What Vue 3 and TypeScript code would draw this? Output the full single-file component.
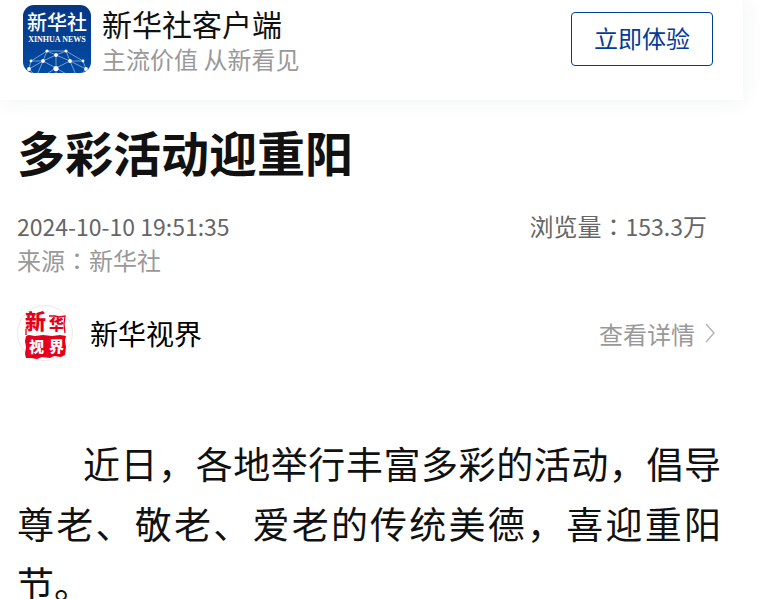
<script setup lang="ts">
interface Article {
  title: string
  time: string
  source: string
  views: string
  account: string
  body: string
}

const article: Article = {
  title: '多彩活动迎重阳',
  time: '2024-10-10 19:51:35',
  source: '新华社',
  views: '153.3',
  account: '新华视界',
  body: '近日，各地举行丰富多彩的活动，倡导尊老、敬老、爱老的传统美德，喜迎重阳节。',
}
</script>

<template>
  <div class="page" lang="zh-CN">
    <header class="banner">
      <svg class="logo" viewBox="0 0 68 68" role="img" aria-label="新华社">
        <defs>
          <linearGradient id="blue" x1="0" y1="0" x2="0" y2="1">
            <stop offset="0" stop-color="#063684" />
            <stop offset="1" stop-color="#034ba4" />
          </linearGradient>
          <clipPath id="tile"><rect width="68" height="68" rx="11" /></clipPath>
        </defs>
        <g clip-path="url(#tile)">
          <rect width="68" height="68" fill="url(#blue)" />
          <text class="logo-cn" x="34" y="25" text-anchor="middle">新华社</text>
          <text class="logo-en" x="34" y="37" text-anchor="middle">XINHUA NEWS</text>
          <path
            d="M6 64 8 56 24 46 43 46 60 56 63 64M24 46 33 50 43 46M8 56 20 56 33 50 47 56 60 56M24 46 20 56 6 64M43 46 47 56 63 64M20 56 33 63 47 56M33 50V68M20 56 14 70M47 56 53 70M33 63 22 70M33 63 45 70M6 64 2 70M6 64 12 70M63 64 67 70M63 64 58 70"
            fill="none" stroke="#a9c3e5" stroke-width="0.7"
          />
          <g fill="#fff">
            <circle cx="24" cy="46" r="1.6" /><circle cx="43" cy="46" r="1.6" />
            <circle cx="33" cy="50" r="1.9" /><circle cx="8" cy="56" r="1.4" />
            <circle cx="20" cy="56" r="1.9" /><circle cx="47" cy="56" r="1.9" />
            <circle cx="60" cy="56" r="1.4" /><circle cx="6" cy="64" r="1.9" />
            <circle cx="33" cy="63.500" r="2.6" /><circle cx="63" cy="64" r="1.9" />
          </g>
        </g>
      </svg>
      <div class="brand">
        <div class="name">新华社客户端</div>
        <div class="slogan">主流价值 从新看见</div>
      </div>
      <button class="try" type="button">立即体验</button>
    </header>

    <main class="article">
      <h1>{{ article.title }}</h1>
      <div class="meta">
        <time class="num">{{ article.time }}</time>
        <span>浏览量<span class="colon" lang="zh-TW">：</span><span class="num">{{ article.views }}</span>万</span>
      </div>
      <div class="source">来源<span class="colon" lang="zh-TW">：</span>{{ article.source }}</div>

      <section class="account">
        <svg class="avatar" viewBox="0 0 56 56" aria-hidden="true">
          <circle cx="28" cy="28" r="27.500" fill="#fff" stroke="#e9e9e9" />
          <path
            d="M9 31l3-1 6 1 8-1 9 1 8-1 6 1-1 5 1 6-1 8-4 2-7-1-4 2-8-1-5 2-6-1-5 0-1-4 1-7-1-6z"
            fill="#e4001b"
          />
          <path d="M32 11l6 0 4 1 6-1-1 8 1 9M9 24v6" fill="none" stroke="#e4001b" stroke-width="1.3" />
          <text class="seal seal-big" x="8" y="24">新</text>
          <text class="seal seal-mid" x="32" y="25">华</text>
          <text class="seal seal-light" x="12" y="47">视</text>
          <text class="seal seal-light" x="32" y="47">界</text>
        </svg>
        <span class="account-name">{{ article.account }}</span>
        <a class="detail" href="#">
          查看详情
          <svg class="arrow" viewBox="0 0 10 20" aria-hidden="true">
            <path d="M1 1 9 10 1 19" fill="none" stroke="#b5b5b5" stroke-width="1.5" />
          </svg>
        </a>
      </section>

      <p class="body">{{ article.body }}</p>
    </main>
  </div>
</template>

<style>
body {
  background: #fff;
}
</style>

<style scoped>
.page {
  font-family: "Noto Sans CJK SC", sans-serif;
  font-size: 24px;
  color: #111;
  padding-right: 33px;
}

.banner {
  display: flex;
  align-items: flex-start;
  box-sizing: border-box;
  height: 100px;
  padding: 5px 30px 0 23px;
  background: #fff;
  box-shadow: 0 0 20px rgba(20, 50, 50, 0.07);
}

.logo {
  width: 68px;
  height: 68px;
  flex: none;
}

.logo-cn {
  font-size: 20px;
  font-weight: 500;
  fill: #fff;
}

.logo-en {
  font-family: "Liberation Serif", serif;
  font-size: 8px;
  font-weight: bold;
  fill: #fff;
}

.brand {
  flex: 1;
  margin-left: 11px;
}

.name {
  font-size: 30px;
  line-height: 36px;
}

.slogan {
  line-height: 36px;
  color: #999;
}

.try {
  box-sizing: border-box;
  height: 54px;
  margin-top: 7px;
  padding: 0 22px 2px;
  border: 1px solid #003c9b;
  border-radius: 4px;
  background: #fff;
  color: #003c9b;
  font: inherit;
  line-height: 50px;
}

.article {
  padding: 21px 22px 0 17px;
}

h1 {
  margin: 0;
  font-size: 48px;
  line-height: 60px;
}

.meta {
  display: flex;
  justify-content: space-between;
  align-items: baseline;
  margin-top: 28px;
  padding-right: 14px;
  line-height: 34px;
  color: #666;
}

.num {
  font-size: 23px;
}

.colon {
  font-family: "Noto Sans CJK TC", sans-serif;
}

.source {
  line-height: 34px;
  color: #999;
}

.account {
  display: flex;
  align-items: center;
  margin-top: 28px;
  padding-right: 6px;
}

.avatar {
  width: 56px;
  height: 56px;
}

.account-name {
  flex: 1;
  margin-left: 17px;
  font-size: 28px;
  line-height: 40px;
  color: #000;
}

.detail {
  display: flex;
  align-items: center;
  gap: 10px;
  color: #999;
  text-decoration: none;
}

.arrow {
  width: 10px;
  height: 20px;
}

.body {
  margin: 72px 0 0;
  font-size: 37px;
  line-height: 60px;
  text-align: justify;
  text-indent: 66px;
}

.seal {
  font-family: "Noto Sans CJK SC", sans-serif;
  font-weight: 900;
  fill: #e4001b;
}

.seal-big {
  font-size: 21px;
}

.seal-mid {
  font-size: 15px;
}

.seal-light {
  font-size: 15px;
  fill: #fff;
}
</style>
